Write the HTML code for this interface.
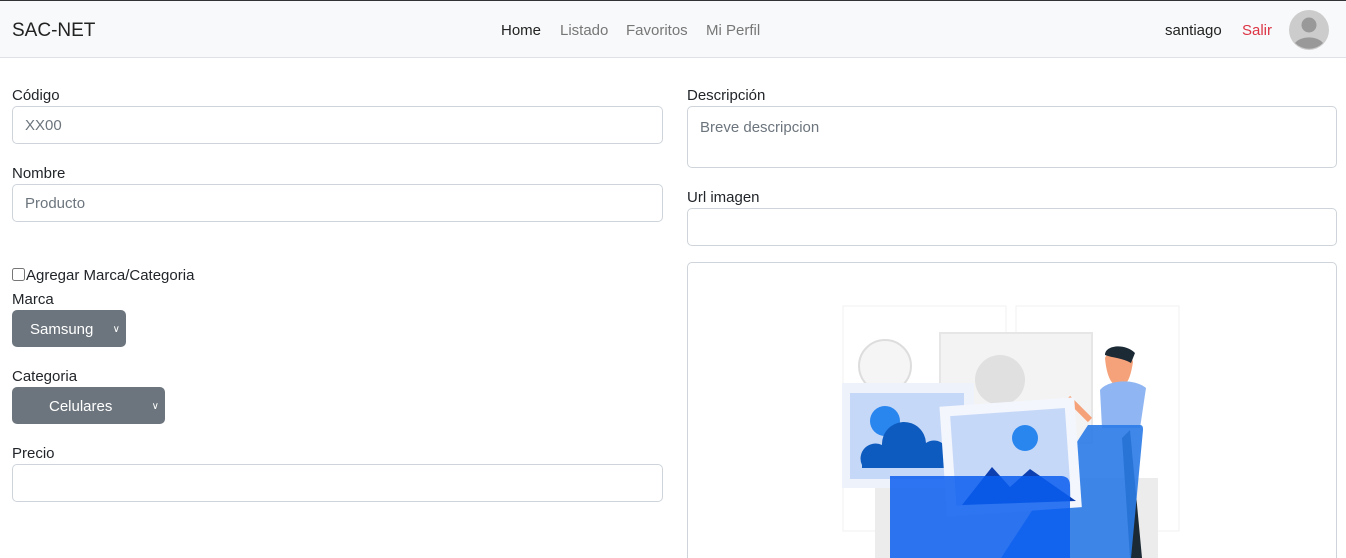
<!DOCTYPE html>
<html style="overflow:hidden;height:558px"><head><meta charset="utf-8"><style>
*{box-sizing:border-box}
body{margin:0;width:1346px;height:558px;overflow:hidden;background:#fff;font-family:"Liberation Sans",sans-serif;color:#212529;font-size:15px;position:relative}
.nav{position:absolute;left:0;top:0;width:1346px;height:58px;background:#f8f9fa;border-top:1px solid #333;border-bottom:1px solid #dee2e6}
.a{position:absolute;white-space:nowrap}
.in{position:absolute;border:1px solid #ced4da;border-radius:5px;background:#fff;color:#6c757d;padding:0 12px;font-size:15px}
.sel{position:absolute;background:#6c757d;color:#fff;border-radius:5px;font-size:15px}
</style></head><body>
<div class="nav">
<div class="a" style="left:12px;top:19px;font-size:19px;color:#222">SAC-NET</div>
<div class="a" style="left:501px;top:21px;color:#222">Home</div>
<div class="a" style="left:560px;top:21px;color:#777">Listado</div>
<div class="a" style="left:626px;top:21px;color:#777">Favoritos</div>
<div class="a" style="left:706px;top:21px;color:#777">Mi Perfil</div>
<div class="a" style="left:1165px;top:21px;color:#222">santiago</div>
<div class="a" style="left:1242px;top:21px;color:#dc3545">Salir</div>
<svg class="a" style="left:1289px;top:9px" width="40" height="40"><circle cx="20" cy="20" r="20" fill="#ccc"/><circle cx="20" cy="15" r="7.5" fill="#999"/><path d="M6 33a16 11 0 0 1 28 0a20 20 0 0 1-28 0z" fill="#999"/></svg>
</div>
<div class="a" style="left:12px;top:87px">Código</div>
<div class="in" style="left:12px;top:106px;width:651px;height:38px;line-height:38px">XX00</div>
<div class="a" style="left:12px;top:165px">Nombre</div>
<div class="in" style="left:12px;top:184px;width:651px;height:38px;line-height:38px">Producto</div>
<div class="a" style="left:12px;top:267px"><input type="checkbox" style="margin:0 1px 0 0;width:13px;height:13px;vertical-align:-1px">Agregar Marca/Categoria</div>
<div class="a" style="left:12px;top:291px">Marca</div>
<div class="sel" style="left:12px;top:310px;width:114px;height:37px;line-height:39px;padding-left:18px">Samsung<span style="position:absolute;right:6px;font-size:10px">&#x2228;</span></div>
<div class="a" style="left:12px;top:368px">Categoria</div>
<div class="sel" style="left:12px;top:387px;width:153px;height:37px;line-height:39px;padding-left:37px">Celulares<span style="position:absolute;right:6px;font-size:10px">&#x2228;</span></div>
<div class="a" style="left:12px;top:445px">Precio</div>
<div class="in" style="left:12px;top:464px;width:651px;height:38px"></div>
<div class="a" style="left:687px;top:87px">Descripción</div>
<div class="in" style="left:687px;top:106px;width:650px;height:62px;padding-top:12px">Breve descripcion</div>
<div class="a" style="left:687px;top:189px">Url imagen</div>
<div class="in" style="left:687px;top:208px;width:650px;height:38px"></div>
<div class="in" style="left:687px;top:262px;width:650px;height:330px"></div>
<svg class="a" style="left:0;top:0" width="1346" height="558">
<rect x="843" y="306" width="163" height="225" fill="none" stroke="#f2f2f2"/>
<rect x="1016" y="306" width="163" height="225" fill="none" stroke="#f2f2f2"/>
<rect x="940" y="333" width="152" height="110" fill="#f3f3f3" stroke="#e6e6e6" stroke-width="2"/>
<circle cx="1000" cy="380" r="25" fill="#e0e0e0"/>
<circle cx="885" cy="366" r="26" fill="#f5f5f5" stroke="#ddd" stroke-width="2"/>
<rect x="875" y="478" width="283" height="80" fill="#ececec"/>
<rect x="842" y="383" width="132" height="105" fill="#eef2fb"/>
<rect x="850" y="393" width="114" height="86" fill="#c6d8f7"/>
<circle cx="885" cy="421" r="15" fill="#2a86ef"/>
<path d="M862 465a15 15 0 0 1 20-20a22 22 0 0 1 44-2a14 14 0 0 1 22 12v13h-86z" fill="#0d5bbf"/>
<path d="M1105 358c4-10 25-10 28 4c-2 12-4 20-10 24c-8 3-16-4-18-28z" fill="#f5a27a"/>
<path d="M1105 355c0-10 20-12 30-2l-4 10c-8-5-18-5-26-8z" fill="#1c2a36"/>
<path d="M1100 390c8-10 34-12 46-2l-6 40h-38z" fill="#8fb6f2"/>
<path d="M1130 430l12 128h-12l-8-120z" fill="#1c2a36"/>
<path d="M1068 398l22 22" stroke="#f5a27a" stroke-width="6"/>
<path d="M1088 425h52c3 0 3 3 3 5l-12 128h-130z" fill="#2a7be8" opacity=".9"/>
<g transform="rotate(-4 1010 455)"><rect x="943" y="402" width="135" height="110" fill="#f3f6fd"/><rect x="953" y="412" width="115" height="90" fill="#c6d8f7"/></g>
<circle cx="1025" cy="438" r="13" fill="#2a86ef"/>
<path d="M962 505l30-38l18 20l20-18l46 32z" fill="#0d3fb0"/>
<path d="M890 476h170c8 0 10 4 10 10v72h-180z" fill="#0a5ef0" opacity=".85"/>
</svg>
</body></html>
